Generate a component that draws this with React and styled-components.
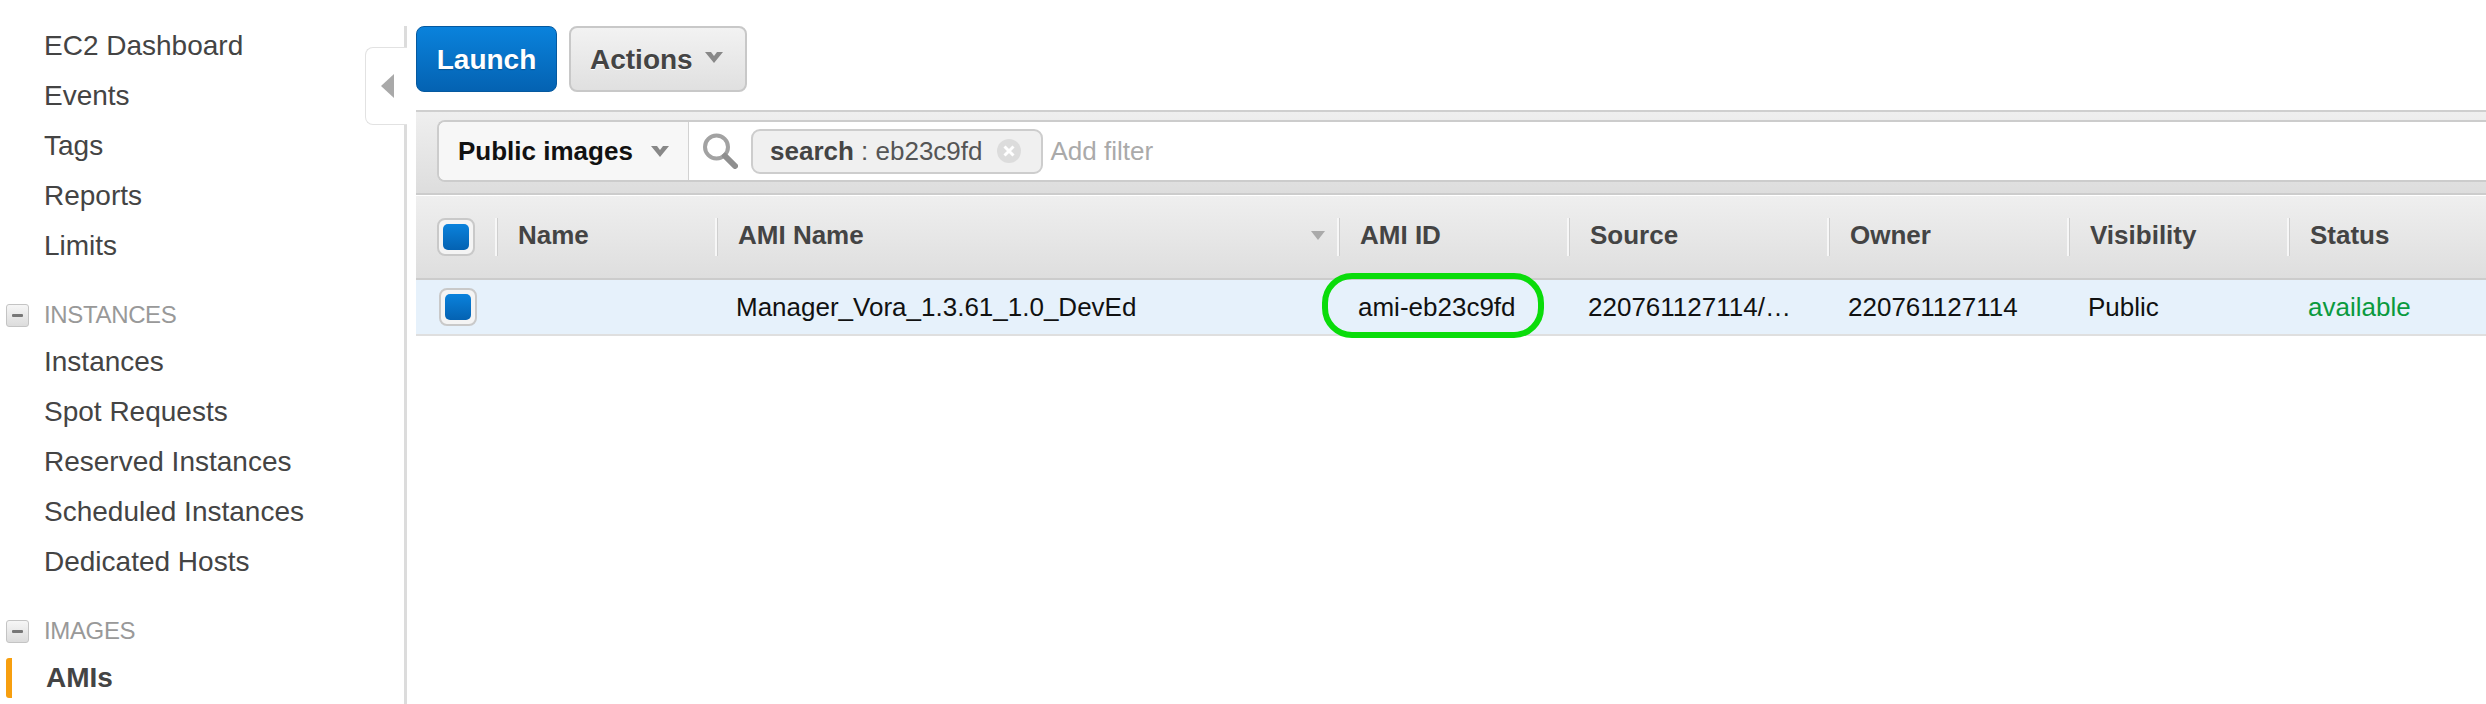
import React from "react";
import styled, { createGlobalStyle } from "styled-components";

const GlobalStyle = createGlobalStyle`
  html, body {
    margin: 0;
    padding: 0;
    background: #fff;
    overflow: hidden;
  }
  body {
    font-family: "Liberation Sans", Arial, sans-serif;
    color: #444;
  }
`;

const Shell = styled.div`
  display: flex;
  width: 2486px;
  height: 704px;
  overflow: hidden;
`;

const Nav = styled.nav`
  width: 404px;
  flex: none;
  padding-top: 21px;
  box-sizing: border-box;
`;

const NavItem = styled.div`
  display: flex;
  align-items: center;
  height: 50px;
  padding-left: ${(p) => (p.$active ? "6px" : "44px")};
  font-size: 28px;
  font-weight: ${(p) => (p.$active ? 700 : 400)};
  color: #444;

  ${(p) =>
    p.$active &&
    `&::before {
      content: "";
      width: 6px;
      height: 40px;
      margin-right: 34px;
      border-radius: 3px 0 0 3px;
      background: #f79f0f;
    }`}
`;

const NavHeading = styled.div`
  display: flex;
  align-items: center;
  height: 44px;
  margin-top: 22px;
  padding-left: 6px;
  font-size: 24px;
  letter-spacing: -0.35px;
  color: #999;
`;

const Collapse = styled.span`
  width: 23px;
  height: 23px;
  margin-right: 15px;
  box-sizing: border-box;
  display: flex;
  align-items: center;
  justify-content: center;
  border: 1px solid #c4c4c4;
  border-radius: 3px;
  background: linear-gradient(#f6f6f6, #dcdcdc);

  &::before {
    content: "";
    width: 11px;
    height: 3px;
    background: #777;
    border-radius: 1px;
  }
`;

const Rail = styled.div`
  position: relative;
  width: 3px;
  flex: none;
  margin-top: 26px;
  background: #dcdcdc;
`;

const RailTab = styled.div`
  position: absolute;
  right: 0;
  top: 21px;
  width: 42px;
  height: 78px;
  box-sizing: border-box;
  display: flex;
  align-items: center;
  padding-left: 15px;
  background: #fff;
  border: 1px solid #e2e2e2;
  border-right: none;
  border-radius: 8px 0 0 8px;
`;

const Main = styled.main`
  flex: 1;
  min-width: 0;
  padding-top: 26px;
  padding-left: 9px;
`;

const Toolbar = styled.div`
  display: flex;
  gap: 12px;
  height: 66px;
  margin-bottom: 18px;
`;

const Button = styled.div`
  display: flex;
  align-items: center;
  box-sizing: border-box;
  height: 66px;
  padding-top: 2px;
  font-size: 28px;
  font-weight: 700;
  border-radius: 8px;
`;

const LaunchButton = styled(Button)`
  width: 141px;
  justify-content: center;
  color: #fff;
  background: linear-gradient(#0a82dc, #0462b2);
  border: 1px solid #05599f;
  text-shadow: 0 1px 1px rgba(0, 0, 0, 0.25);
`;

const ActionsButton = styled(Button)`
  width: 178px;
  padding-left: 19px;
  gap: 12px;
  color: #444;
  background: linear-gradient(#f2f2f2, #e0e0e0);
  border: 2px solid #c8c8c8;
  text-shadow: 0 1px 0 #fff;

  svg {
    margin-top: -5px;
  }
`;

const FilterBar = styled.div`
  height: 73px;
  margin-bottom: 1px;
  padding-top: 8px;
  background: linear-gradient(#efefef, #dddddd);
  border-top: 2px solid #cfcfcf;
  border-bottom: 2px solid #cccccc;
`;

const FilterInner = styled.div`
  display: flex;
  align-items: stretch;
  height: 62px;
  margin-left: 21px;
  box-sizing: border-box;
  background: #fff;
  border-top: 2px solid #cccccc;
  border-bottom: 2px solid #cccccc;
  border-left: 2px solid #cccccc;
  border-radius: 8px 0 0 8px;
`;

const ScopeSelect = styled.div`
  width: 250px;
  flex: none;
  box-sizing: border-box;
  display: flex;
  align-items: center;
  gap: 18px;
  padding-left: 19px;
  font-size: 26px;
  font-weight: 700;
  color: #111;
  background: #f7f7f7;
  border-right: 1px solid #d2d2d2;
  border-radius: 6px 0 0 6px;
`;

const SearchBox = styled.div`
  flex: 1;
  display: flex;
  align-items: center;
  padding-left: 13px;
  font-size: 26px;
  color: #aaa;
`;

const Token = styled.div`
  display: flex;
  align-items: center;
  height: 45px;
  box-sizing: border-box;
  margin: 0 8px 0 13px;
  padding: 0 20px 0 17px;
  gap: 14px;
  font-size: 26px;
  color: #555;
  background: #f0f0f0;
  border: 2px solid #cdcdcd;
  border-radius: 9px;

  b {
    color: #444;
  }
`;

const TableGrid = styled.div`
  display: grid;
  grid-template-columns: 79px 220px 622px 230px 260px 240px 220px 1fr;
`;

const HeaderRow = styled(TableGrid)`
  height: 84px;
  box-sizing: border-box;
  align-items: center;
  background: linear-gradient(#efefef, #dedede);
  border-bottom: 2px solid #cccccc;
`;

const HeaderCell = styled.div`
  display: flex;
  align-items: center;
  justify-content: space-between;
  height: 38px;
  box-sizing: border-box;
  padding: 0 12px 4px 21px;
  font-size: 26px;
  font-weight: 700;
  color: #444;
  border-left: 2px solid #f7f7f7;
  box-shadow: inset 1px 0 0 #cfcfcf;
`;

const CheckCell = styled.div`
  display: flex;
  align-items: center;
  padding-left: ${(p) => p.$pad}px;
`;

const Check = styled.span`
  width: 38px;
  height: 38px;
  box-sizing: border-box;
  padding: 4px;
  border: 2px solid #c9c9c9;
  border-radius: 8px;
  background: #f4f4f4;

  &::before {
    content: "";
    display: block;
    width: 100%;
    height: 100%;
    border-radius: 5px;
    background: linear-gradient(#0a82dc, #0462b2);
  }
`;

const DataRow = styled(TableGrid)`
  height: 56px;
  box-sizing: border-box;
  align-items: center;
  background: #e6f1fb;
  border-bottom: 2px solid #dfdfdf;
`;

const DataCell = styled.div`
  position: relative;
  padding-left: 21px;
  font-size: 26px;
  color: ${(p) => p.$color || "#111"};
  white-space: nowrap;
`;

const Highlight = styled.span`
  position: absolute;
  left: -15px;
  top: -19px;
  width: 222px;
  height: 65px;
  box-sizing: border-box;
  border: 6px solid #0adc0a;
  border-radius: 30px;
`;

const Chevron = ({ color = "#888" }) => (
  <svg width="18" height="11" viewBox="0 0 18 11">
    <path d="M0 0 L6 0 L9 4 L12 0 L18 0 L9 11 Z" fill={color} />
  </svg>
);

const SearchIcon = () => (
  <svg width="36" height="36" viewBox="0 0 36 36">
    <circle cx="14.5" cy="14" r="11.5" fill="#fff" stroke="#a2a2a2" strokeWidth="4" />
    <path d="M23 23 L33 33" stroke="#8f8f8f" strokeWidth="6" strokeLinecap="round" />
  </svg>
);

const TokenClose = () => (
  <svg width="24" height="24" viewBox="0 0 24 24">
    <circle cx="12" cy="12" r="12" fill="#dcdcdc" />
    <path d="M7.5 7.5 L16.5 16.5 M16.5 7.5 L7.5 16.5" stroke="#fff" strokeWidth="3" />
  </svg>
);

const CollapseArrow = () => (
  <svg width="13" height="24" viewBox="0 0 13 24">
    <path d="M13 0 L13 24 L0 12 Z" fill="#a9a9a9" />
  </svg>
);

const SortArrow = () => (
  <svg width="14" height="9" viewBox="0 0 14 9">
    <path d="M0 0 L14 0 L7 9 Z" fill="#aaa" />
  </svg>
);

const general = ["EC2 Dashboard", "Events", "Tags", "Reports", "Limits"];
const instances = ["Instances", "Spot Requests", "Reserved Instances", "Scheduled Instances", "Dedicated Hosts"];

const App = () => {
  return (
    <Shell>
      <GlobalStyle />
      <Nav>
        {general.map((item) => (
          <NavItem key={item}>{item}</NavItem>
        ))}
        <NavHeading>
          <Collapse />
          INSTANCES
        </NavHeading>
        {instances.map((item) => (
          <NavItem key={item}>{item}</NavItem>
        ))}
        <NavHeading>
          <Collapse />
          IMAGES
        </NavHeading>
        <NavItem $active>AMIs</NavItem>
      </Nav>
      <Rail>
        <RailTab>
          <CollapseArrow />
        </RailTab>
      </Rail>
      <Main>
        <Toolbar>
          <LaunchButton>Launch</LaunchButton>
          <ActionsButton>
            Actions
            <Chevron />
          </ActionsButton>
        </Toolbar>
        <FilterBar>
          <FilterInner>
            <ScopeSelect>
              Public images
              <Chevron />
            </ScopeSelect>
            <SearchBox>
              <SearchIcon />
              <Token>
                <span>
                  <b>search</b> : eb23c9fd
                </span>
                <TokenClose />
              </Token>
              Add filter
            </SearchBox>
          </FilterInner>
        </FilterBar>
        <HeaderRow>
          <CheckCell $pad={21}>
            <Check />
          </CheckCell>
          <HeaderCell>Name</HeaderCell>
          <HeaderCell>
            AMI Name
            <SortArrow />
          </HeaderCell>
          <HeaderCell>AMI ID</HeaderCell>
          <HeaderCell>Source</HeaderCell>
          <HeaderCell>Owner</HeaderCell>
          <HeaderCell>Visibility</HeaderCell>
          <HeaderCell>Status</HeaderCell>
        </HeaderRow>
        <DataRow>
          <CheckCell $pad={23}>
            <Check />
          </CheckCell>
          <DataCell />
          <DataCell>Manager_Vora_1.3.61_1.0_DevEd</DataCell>
          <DataCell>
            ami-eb23c9fd
            <Highlight />
          </DataCell>
          <DataCell>220761127114/…</DataCell>
          <DataCell>220761127114</DataCell>
          <DataCell>Public</DataCell>
          <DataCell $color="#0a9a3e">available</DataCell>
        </DataRow>
      </Main>
    </Shell>
  );
};

export default App;
